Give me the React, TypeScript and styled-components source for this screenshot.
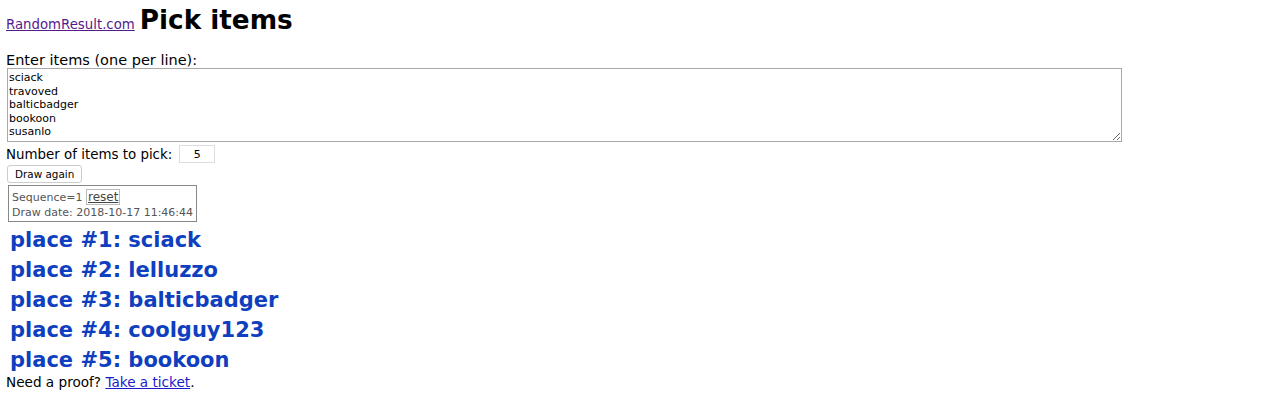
import React from "react";
import styled, { createGlobalStyle } from "styled-components";

const GlobalStyle = createGlobalStyle`
  html, body {
    margin: 0;
    padding: 0;
    background: #fff;
  }
  body {
    font-family: "DejaVu Sans", Verdana, sans-serif;
    color: #000;
  }
`;

const Page = styled.div`
  padding: 0 6px;
`;

const Header = styled.div`
  display: flex;
  align-items: baseline;
  gap: 5px;
  height: 40px;
  padding-top: 1px;
`;

const SiteLink = styled.a`
  font-size: 13.3px;
  color: #551a8b;
  text-decoration: underline;
`;

const Title = styled.h1`
  margin: 0;
  font-size: 26.3px;
  font-weight: bold;
  line-height: 38px;
`;

const Label = styled.div`
  font-size: 14.5px;
  line-height: 15px;
  margin-top: 12px;
`;

const Items = styled.textarea`
  display: block;
  box-sizing: border-box;
  width: 1115px;
  height: 74px;
  margin: 0 0 0 1px;
  padding: 2px 1px;
  border: 1px solid #a9a9a9;
  font-family: "DejaVu Sans", Verdana, sans-serif;
  font-size: 11px;
  line-height: 13.5px;
  color: #000;
  resize: both;
`;

const PickRow = styled.div`
  display: flex;
  align-items: center;
  gap: 7px;
  font-size: 13.4px;
  margin-top: 3px;
  height: 18px;
`;

const CountInput = styled.input`
  box-sizing: border-box;
  width: 36px;
  height: 18px;
  border: 1px solid #ddd;
  text-align: center;
  font-family: "DejaVu Sans", Verdana, sans-serif;
  font-size: 11px;
  padding: 0;
`;

const DrawButton = styled.button`
  display: block;
  box-sizing: border-box;
  margin: 2px 0 0 1px;
  height: 18px;
  padding: 0 7px;
  background: #fff;
  border: 1px solid #ccc;
  border-radius: 3px;
  font-family: "DejaVu Sans", Verdana, sans-serif;
  font-size: 10.4px;
  color: #000;
`;

const InfoBox = styled.div`
  box-sizing: border-box;
  width: 189px;
  margin: 2px 0 0 2px;
  padding: 4px 2px 1px 3px;
  border: 1px solid #888;
  font-size: 11px;
  line-height: 15px;
  color: #555;
`;

const ResetLink = styled.a`
  color: #444;
  text-decoration: underline;
  border: 1px solid #bbb;
  padding: 0 1px;
  font-size: 12px;
`;

const Results = styled.div`
  margin-top: 3px;
  padding-left: 4px;
`;

const Place = styled.div`
  font-size: 21px;
  line-height: 30px;
  font-weight: bold;
  color: #0f3fbf;
`;

const Footer = styled.div`
  font-size: 13.6px;
  line-height: 16px;
  margin-top: -1px;
`;

const TicketLink = styled.a`
  color: #1a1acc;
  text-decoration: underline;
`;

const items = ["sciack", "travoved", "balticbadger", "bookoon", "susanlo"];
const picks = ["sciack", "lelluzzo", "balticbadger", "coolguy123", "bookoon"];

export default function App() {
  return (
    <Page>
      <GlobalStyle />
      <Header>
        <SiteLink href="#">RandomResult.com</SiteLink>
        <Title>Pick items</Title>
      </Header>
      <Label>Enter items (one per line):</Label>
      <Items defaultValue={items.join("\n")} />
      <PickRow>
        Number of items to pick:
        <CountInput defaultValue="5" />
      </PickRow>
      <DrawButton>Draw again</DrawButton>
      <InfoBox>
        Sequence=1 <ResetLink href="#">reset</ResetLink>
        <br />
        Draw date: 2018-10-17 11:46:44
      </InfoBox>
      <Results>
        {picks.map((p, i) => (
          <Place key={i}>
            place #{i + 1}: {p}
          </Place>
        ))}
      </Results>
      <Footer>
        Need a proof? <TicketLink href="#">Take a ticket</TicketLink>.
      </Footer>
    </Page>
  );
}
